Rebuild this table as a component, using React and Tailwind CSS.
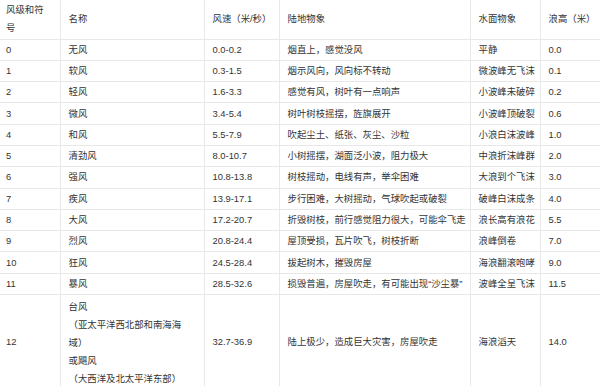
const HEAD = ['风级和符号', '名称', '风速（米/秒）', '陆地物象', '水面物象', '浪高（米）'];

const ROWS = [
  ['0', '无风', '0.0-0.2', '烟直上，感觉没风', '平静', '0.0'],
  ['1', '软风', '0.3-1.5', '烟示风向，风向标不转动', '微波峰无飞沫', '0.1'],
  ['2', '轻风', '1.6-3.3', '感觉有风，树叶有一点响声', '小波峰未破碎', '0.2'],
  ['3', '微风', '3.4-5.4', '树叶树枝摇摆，旌旗展开', '小波峰顶破裂', '0.6'],
  ['4', '和风', '5.5-7.9', '吹起尘土、纸张、灰尘、沙粒', '小浪白沫波峰', '1.0'],
  ['5', '清劲风', '8.0-10.7', '小树摇摆，湖面泛小波，阻力极大', '中浪折沫峰群', '2.0'],
  ['6', '强风', '10.8-13.8', '树枝摇动，电线有声，举伞困难', '大浪到个飞沫', '3.0'],
  ['7', '疾风', '13.9-17.1', '步行困难，大树摇动，气球吹起或破裂', '破峰白沫成条', '4.0'],
  ['8', '大风', '17.2-20.7', '折毁树枝，前行感觉阻力很大，可能伞飞走', '浪长高有浪花', '5.5'],
  ['9', '烈风', '20.8-24.4', '屋顶受损，瓦片吹飞，树枝折断', '浪峰倒卷', '7.0'],
  ['10', '狂风', '24.5-28.4', '拔起树木，摧毁房屋', '海浪翻滚咆哮', '9.0'],
  ['11', '暴风', '28.5-32.6', '损毁普遍，房屋吹走，有可能出现“沙尘暴”', '波峰全呈飞沫', '11.5'],
];

const cell = 'border border-[#e8e8e8] align-middle whitespace-nowrap pl-2 pr-2';
const first = 'border border-[#e8e8e8] align-middle whitespace-nowrap pl-[6px] pr-1';

export default function App() {
  return (
    <div
      className="w-[600px] h-[386px] overflow-hidden bg-white text-[#333] text-[9.4px] leading-[18px]"
      style={{ fontFamily: '"Liberation Sans", "Noto Sans CJK SC", sans-serif' }}
    >
      <table className="w-[600px] table-fixed border-collapse border-hidden">
        <colgroup>
          <col className="w-[60px]" />
          <col className="w-[144px]" />
          <col className="w-[75px]" />
          <col className="w-[191px]" />
          <col className="w-[70px]" />
          <col className="w-[60px]" />
        </colgroup>
        <thead>
          <tr className="h-[39px]">
            <th className={first + ' font-normal text-left'}>
              风级和符<br />号
            </th>
            {HEAD.slice(1).map((h) => (
              <th key={h} className={cell + ' font-normal text-left'}>{h}</th>
            ))}
          </tr>
        </thead>
        <tbody>
          {ROWS.map((r) => (
            <tr key={r[0]} className="h-[21.3px]">
              <td className={first}>{r[0]}</td>
              {r.slice(1).map((v, i) => (
                <td key={i} className={cell}>{v}</td>
              ))}
            </tr>
          ))}
          <tr className="h-[94px]">
            <td className={first}>12</td>
            <td className={cell + ' pt-[2px]'}>
              台风<br />
              （亚太平洋西北部和南海海<br />
              域）<br />
              或飓风<br />
              （大西洋及北太平洋东部）
            </td>
            <td className={cell}>32.7-36.9</td>
            <td className={cell}>陆上极少，造成巨大灾害，房屋吹走</td>
            <td className={cell}>海浪滔天</td>
            <td className={cell}>14.0</td>
          </tr>
        </tbody>
      </table>
    </div>
  );
}
